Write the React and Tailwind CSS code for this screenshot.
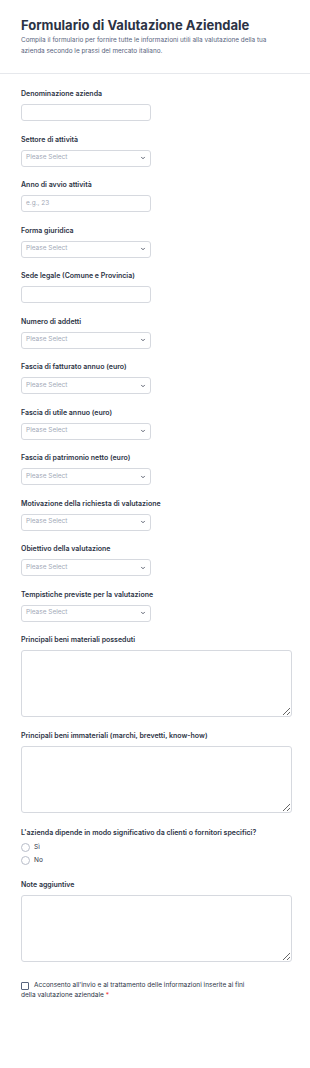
import React from "react";

const font = { fontFamily: "Inter, 'Noto Sans', sans-serif" };

const fields = [
  { type: "input", label: "Denominazione azienda" },
  { type: "select", label: "Settore di attività" },
  { type: "input", label: "Anno di avvio attività", placeholder: "e.g., 23" },
  { type: "select", label: "Forma giuridica" },
  { type: "input", label: "Sede legale (Comune e Provincia)" },
  { type: "select", label: "Numero di addetti" },
  { type: "select", label: "Fascia di fatturato annuo (euro)" },
  { type: "select", label: "Fascia di utile annuo (euro)" },
  { type: "select", label: "Fascia di patrimonio netto (euro)" },
  { type: "select", label: "Motivazione della richiesta di valutazione" },
  { type: "select", label: "Obiettivo della valutazione" },
  { type: "select", label: "Tempistiche previste per la valutazione" },
];

function Label({ children, mb = "mb-[5px]" }) {
  return (
    <label className={`block text-[7px] leading-[10px] font-semibold text-[#2c3345] ${mb}`}>
      {children}
    </label>
  );
}

function Chevron() {
  return (
    <svg
      className="w-[6px] h-[6px] text-[#2c3345]"
      viewBox="0 0 24 24"
      fill="none"
      stroke="currentColor"
      strokeWidth={3}
      strokeLinecap="round"
      strokeLinejoin="round"
    >
      <path d="M6 9l6 6 6-6" />
    </svg>
  );
}

function Field({ field }) {
  if (field.type === "select") {
    return (
      <div className="h-[45.5px]">
        <Label>{field.label}</Label>
        <div className="w-[130px] h-[17px] border border-[#d6d9df] rounded-[3px] flex items-center justify-between px-[4px] bg-white">
          <span className="text-[6.5px] text-[#a3a9b7]">Please Select</span>
          <Chevron />
        </div>
      </div>
    );
  }
  return (
    <div className="h-[45.5px]">
      <Label>{field.label}</Label>
      <div className="w-[130px] h-[17px] border border-[#d6d9df] rounded-[3px] flex items-center px-[4px] bg-white">
        <span className="text-[6.5px] text-[#a3a9b7]">{field.placeholder || ""}</span>
      </div>
    </div>
  );
}

function TextArea({ label, mb }) {
  return (
    <div className={mb}>
      <Label>{label}</Label>
      <textarea className="block w-[271px] h-[67px] border border-[#d6d9df] rounded-[3px] bg-white outline-none" />
    </div>
  );
}

function Radio({ text }) {
  return (
    <div className="flex items-center gap-[4px] h-[13px]">
      <span className="w-[9px] h-[9px] rounded-full border border-[#b8bdc9] bg-white" />
      <span className="text-[6.5px] text-[#2c3345]">{text}</span>
    </div>
  );
}

export default function App() {
  return (
    <div className="w-[310px] min-h-[1068px] bg-white" style={font}>
      <div className="px-[21px] pt-[16px] pb-[16px] border-b border-[#e6e8ec]">
        <h1 className="text-[13px] leading-[18px] font-bold text-[#2c3345]">
          Formulario di Valutazione Aziendale
        </h1>
        <p className="mt-[1px] text-[6.4px] leading-[11px] text-[#57647e]">
          Compila il formulario per fornire tutte le informazioni utili alla valutazione della tua azienda secondo le prassi del mercato italiano.
        </p>
      </div>

      <div className="px-[21px] pt-[15px]">
        {fields.map((f) => (
          <Field key={f.label} field={f} />
        ))}
        <TextArea label="Principali beni materiali posseduti" mb="mb-[14px]" />
        <TextArea label="Principali beni immateriali (marchi, brevetti, know-how)" mb="mb-[15px]" />

        <div className="mb-[13px]">
          <Label mb="mb-[3px]">L'azienda dipende in modo significativo da clienti o fornitori specifici?</Label>
          <Radio text="Sì" />
          <Radio text="No" />
        </div>

        <TextArea label="Note aggiuntive" mb="mb-[19px]" />

        {/* consent checkbox, wrapped as in the original */}
        <div className="text-[6.5px] leading-[9.5px] text-[#2c3345]">
          <div className="flex items-center">
            <span className="shrink-0 w-[8px] h-[8px] border border-[#57647e] rounded-[1px] mr-[5px]" />
            <span className="whitespace-nowrap">Acconsento all'invio e al trattamento delle informazioni inserite ai fini</span>
          </div>
          <div className="flex gap-[2px]">
            <span>della valutazione aziendale</span>
            <span className="text-[#f23a3c]">*</span>
          </div>
        </div>
      </div>
    </div>
  );
}
